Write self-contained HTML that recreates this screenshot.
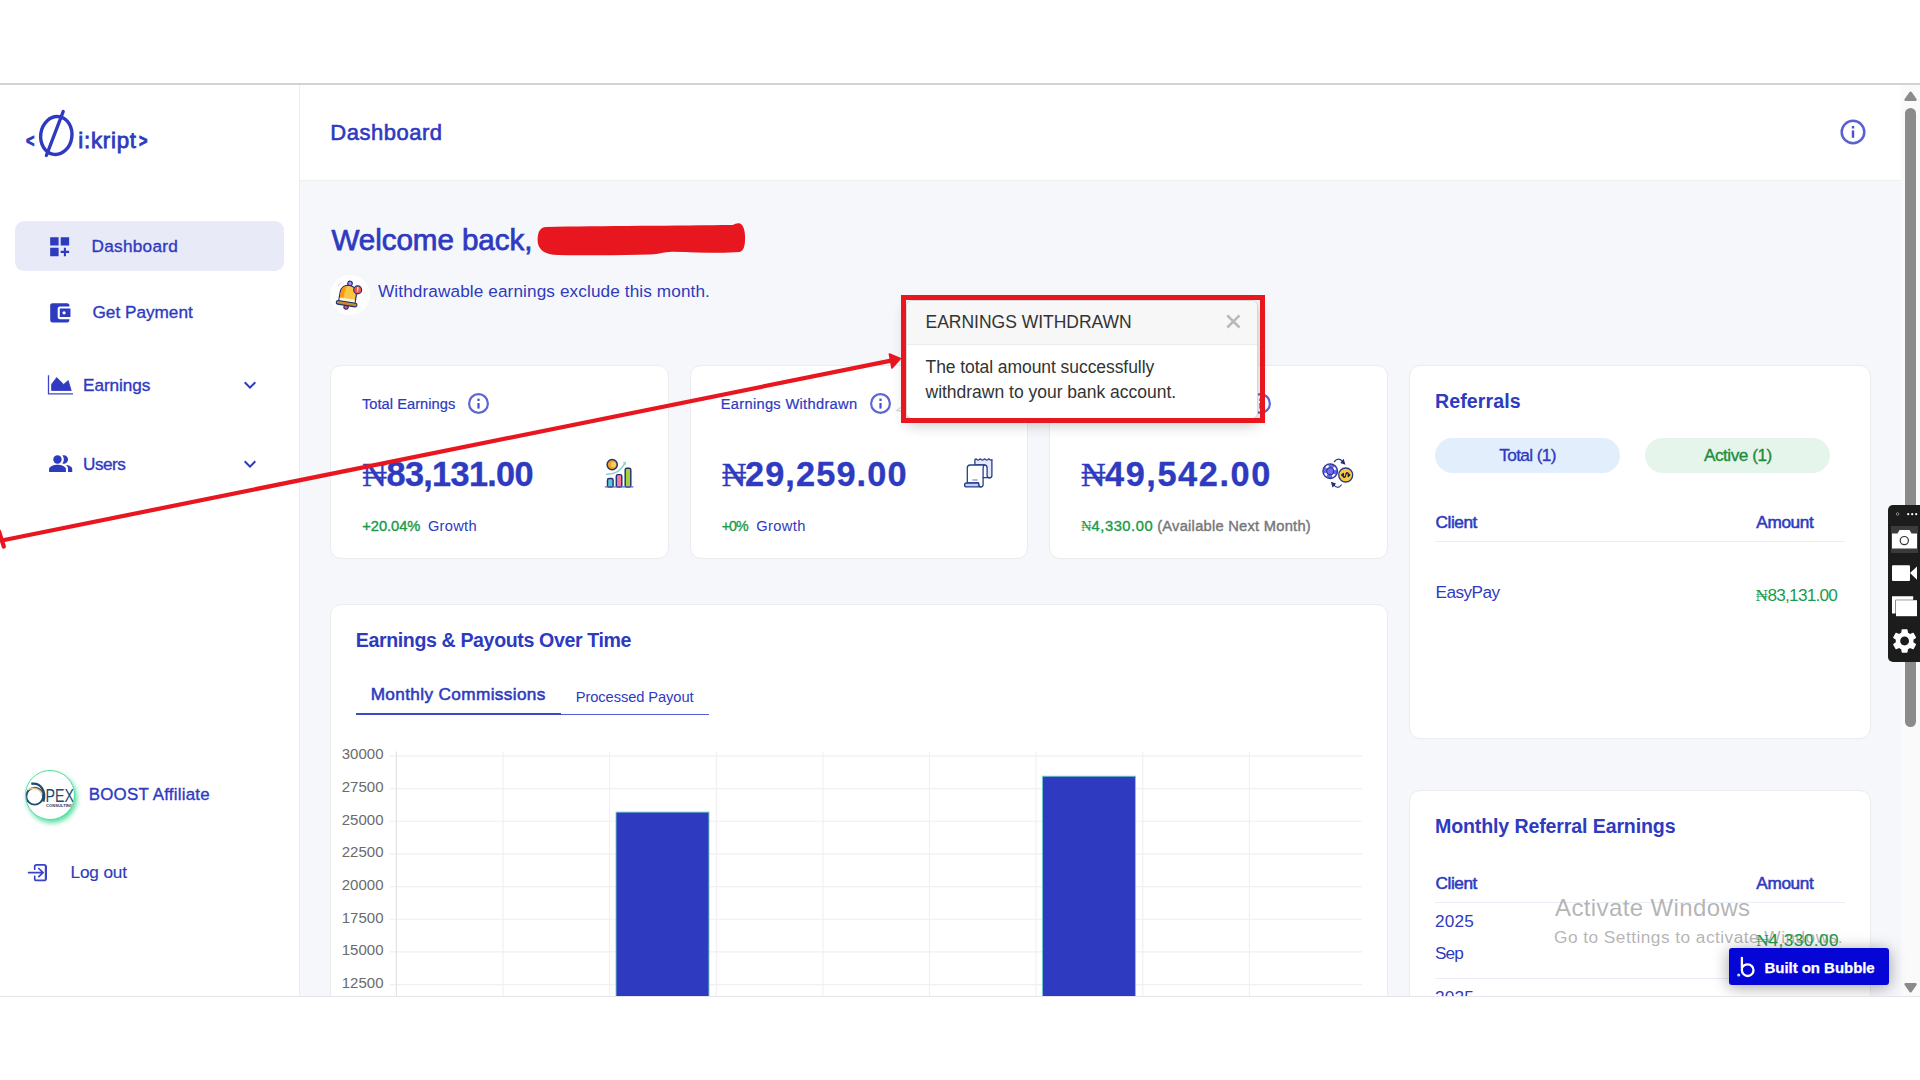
<!DOCTYPE html>
<html lang="en"><head><meta charset="utf-8"><title>Dashboard</title>
<style>
*{box-sizing:border-box;margin:0;padding:0}
html,body{width:1920px;height:1080px;overflow:hidden;background:#fff}
body{font-family:'Liberation Sans',sans-serif;position:relative}
#root{position:absolute;left:0;top:0;width:1920px;height:1080px;overflow:hidden}
.abs{position:absolute}
.t{position:absolute;white-space:pre;line-height:1;display:block}
svg{position:absolute;overflow:visible}
.card{position:absolute;background:#fff;border:1px solid #ececef;border-radius:11px}
#lg_lt{left:26.30px;top:131.80px;font-size:18.5px;font-weight:700;color:#2e3abf;letter-spacing:0.000px;-webkit-text-stroke:0.9px #2e3abf;transform:scaleX(.78);transform-origin:0 0;}
#lg_txt{left:78.25px;top:129.80px;font-size:22.3px;font-weight:400;color:#2e3abf;letter-spacing:0.742px;-webkit-text-stroke:0.8px #2e3abf;}
#lg_gt{left:139.30px;top:131.80px;font-size:18.5px;font-weight:700;color:#2e3abf;letter-spacing:0.000px;-webkit-text-stroke:0.9px #2e3abf;transform:scaleX(.78);transform-origin:0 0;}
#sb_dash{left:91.50px;top:238.00px;font-size:17.2px;font-weight:400;color:#2e3abf;letter-spacing:0.275px;-webkit-text-stroke:0.35px #2e3abf;}
#sb_pay{left:92.50px;top:303.50px;font-size:17.2px;font-weight:400;color:#2e3abf;letter-spacing:-0.005px;-webkit-text-stroke:0.35px #2e3abf;}
#sb_earn{left:83.10px;top:377.20px;font-size:17.2px;font-weight:400;color:#2e3abf;letter-spacing:-0.086px;-webkit-text-stroke:0.35px #2e3abf;}
#sb_users{left:83.10px;top:456.00px;font-size:17.2px;font-weight:400;color:#2e3abf;letter-spacing:-0.525px;-webkit-text-stroke:0.35px #2e3abf;}
#sb_boost{left:88.70px;top:787.40px;font-size:16.9px;font-weight:400;color:#2e3abf;letter-spacing:0.236px;-webkit-text-stroke:0.35px #2e3abf;}
#sb_logout{left:70.50px;top:863.50px;font-size:17.2px;font-weight:400;color:#2e3abf;letter-spacing:-0.133px;-webkit-text-stroke:0.15px #2e3abf;}
#hd_title{left:330.25px;top:121.50px;font-size:22px;font-weight:400;color:#2e3abf;letter-spacing:0.525px;-webkit-text-stroke:0.6px #2e3abf;}
#welcome{left:331.50px;top:224.50px;font-size:29.6px;font-weight:400;color:#2e3abf;letter-spacing:-0.067px;-webkit-text-stroke:0.75px #2e3abf;}
#notice{left:378.00px;top:283.00px;font-size:17.2px;font-weight:400;color:#2e3abf;letter-spacing:0.105px;}
#c1_lbl{left:361.90px;top:396.50px;font-size:14.7px;font-weight:400;color:#2e3abf;letter-spacing:0.023px;-webkit-text-stroke:0.2px #2e3abf;}
#c2_lbl{left:720.70px;top:396.50px;font-size:14.7px;font-weight:400;color:#2e3abf;letter-spacing:0.294px;-webkit-text-stroke:0.2px #2e3abf;}
#c1_n{left:362.30px;top:457.80px;font-size:34px;font-weight:400;color:#2e3abf;letter-spacing:0.000px;font-family:'Liberation Serif',serif;-webkit-text-stroke:0.45px #2e3abf;}
#c1_amt{left:386.50px;top:456.80px;font-size:34.3px;font-weight:700;color:#2e3abf;letter-spacing:-0.688px;-webkit-text-stroke:0.35px #2e3abf;}
#c2_n{left:721.70px;top:457.80px;font-size:34px;font-weight:400;color:#2e3abf;letter-spacing:0.000px;font-family:'Liberation Serif',serif;-webkit-text-stroke:0.45px #2e3abf;}
#c2_amt{left:745.00px;top:456.80px;font-size:34.3px;font-weight:700;color:#2e3abf;letter-spacing:1.113px;-webkit-text-stroke:0.35px #2e3abf;}
#c3_n{left:1081.00px;top:457.80px;font-size:34px;font-weight:400;color:#2e3abf;letter-spacing:0.000px;font-family:'Liberation Serif',serif;-webkit-text-stroke:0.45px #2e3abf;}
#c3_amt{left:1105.00px;top:456.80px;font-size:34.3px;font-weight:700;color:#2e3abf;letter-spacing:1.587px;-webkit-text-stroke:0.35px #2e3abf;}
#c1_g1{left:362.30px;top:518.50px;font-size:14.7px;font-weight:400;color:#1b9a4a;letter-spacing:-0.067px;-webkit-text-stroke:0.4px #1b9a4a;}
#c1_g2{left:427.90px;top:518.50px;font-size:14.7px;font-weight:400;color:#2e3abf;letter-spacing:0.280px;}
#c2_g1{left:721.70px;top:518.50px;font-size:14.2px;font-weight:400;color:#1b9a4a;letter-spacing:-0.900px;-webkit-text-stroke:0.35px #1b9a4a;}
#c2_g2{left:756.30px;top:518.50px;font-size:14.7px;font-weight:400;color:#2e3abf;letter-spacing:0.360px;}
#c3_gn{left:1081.00px;top:518.50px;font-size:14.7px;font-weight:400;color:#1b9a4a;letter-spacing:0.000px;font-family:'Liberation Serif',serif;}
#c3_g1{left:1091.50px;top:518.50px;font-size:14.7px;font-weight:400;color:#1b9a4a;letter-spacing:0.571px;-webkit-text-stroke:0.4px #1b9a4a;}
#c3_g2{left:1157.20px;top:518.50px;font-size:14.7px;font-weight:400;color:#777;letter-spacing:0.248px;-webkit-text-stroke:0.4px #777;}
#pp_title{left:925.50px;top:314.20px;font-size:17.5px;font-weight:400;color:#333;letter-spacing:-0.012px;}
#pp_l1{left:925.50px;top:359.00px;font-size:17.5px;font-weight:400;color:#333;letter-spacing:-0.064px;}
#pp_l2{left:925.50px;top:383.70px;font-size:17.5px;font-weight:400;color:#333;letter-spacing:-0.010px;}
#rf_title{left:1434.90px;top:392.20px;font-size:19.6px;font-weight:700;color:#2e3abf;letter-spacing:0.100px;}
#rf_total{left:1499.30px;top:447.10px;font-size:17.2px;font-weight:400;color:#2e3abf;letter-spacing:-0.625px;-webkit-text-stroke:0.35px #2e3abf;}
#rf_active{left:1703.90px;top:447.10px;font-size:17.2px;font-weight:400;color:#1e8c3a;letter-spacing:-0.467px;-webkit-text-stroke:0.35px #1e8c3a;}
#rf_client{left:1435.50px;top:513.70px;font-size:17.2px;font-weight:400;color:#2e3abf;letter-spacing:-0.420px;-webkit-text-stroke:0.55px #2e3abf;}
#rf_amount{left:1756.30px;top:513.70px;font-size:17.2px;font-weight:400;color:#2e3abf;letter-spacing:-0.340px;-webkit-text-stroke:0.55px #2e3abf;}
#rf_easy{left:1435.50px;top:584.10px;font-size:17.2px;font-weight:400;color:#2e3abf;letter-spacing:-0.550px;}
#rf_n{left:1755.50px;top:586.70px;font-size:17.2px;font-weight:400;color:#1b9a4a;letter-spacing:0.000px;font-family:'Liberation Serif',serif;}
#rf_amt{left:1767.50px;top:586.70px;font-size:17.2px;font-weight:400;color:#1b9a4a;letter-spacing:-0.762px;}
#ch_title{left:355.70px;top:630.50px;font-size:19.6px;font-weight:700;color:#2e3abf;letter-spacing:-0.378px;}
#ch_tab1{left:370.70px;top:686.10px;font-size:17.2px;font-weight:400;color:#2e3abf;letter-spacing:0.367px;-webkit-text-stroke:0.55px #2e3abf;}
#ch_tab2{left:575.80px;top:690.20px;font-size:14.7px;font-weight:400;color:#2e3abf;letter-spacing:-0.093px;}
#mr_title{left:1435.00px;top:817.30px;font-size:19.6px;font-weight:700;color:#2e3abf;letter-spacing:-0.138px;}
#mr_client{left:1435.50px;top:875.00px;font-size:17.2px;font-weight:400;color:#2e3abf;letter-spacing:-0.420px;-webkit-text-stroke:0.55px #2e3abf;}
#mr_amount{left:1756.30px;top:875.00px;font-size:17.2px;font-weight:400;color:#2e3abf;letter-spacing:-0.340px;-webkit-text-stroke:0.55px #2e3abf;}
#mr_y1{left:1435.00px;top:913.00px;font-size:17.2px;font-weight:400;color:#2e3abf;letter-spacing:0.150px;}
#mr_m1{left:1435.00px;top:944.50px;font-size:17.2px;font-weight:400;color:#2e3abf;letter-spacing:-0.850px;}
#mr_n{left:1756.30px;top:931.90px;font-size:17.2px;font-weight:400;color:#1b9a4a;letter-spacing:0.000px;font-family:'Liberation Serif',serif;z-index:3;}
#mr_amt{left:1768.50px;top:931.90px;font-size:17.2px;font-weight:400;color:#1b9a4a;letter-spacing:0.443px;z-index:3;}
#mr_y2{left:1435.00px;top:988.50px;font-size:17.2px;font-weight:400;color:#2e3abf;letter-spacing:0.150px;}
#aw1{left:1555.00px;top:895.50px;font-size:24px;font-weight:400;color:rgba(125,125,125,0.58);letter-spacing:0.380px;}
#aw2{left:1554.00px;top:928.50px;font-size:17.3px;font-weight:400;color:rgba(125,125,125,0.58);letter-spacing:0.462px;}
#bb{left:1764.50px;top:959.90px;font-size:15px;font-weight:700;color:#fff;letter-spacing:-0.043px;-webkit-text-stroke:0.25px #fff;z-index:6;}
.ax{position:absolute;left:330px;width:53.5px;text-align:right;font-size:15px;line-height:16px;color:#6b6b6b}
</style></head><body><div id="root">

<!-- browser chrome top line -->
<div class="abs" style="left:0;top:83px;width:1920px;height:2.200px;background:#d2d3d3"></div>

<!-- sidebar -->
<div class="abs" id="sidebar" style="left:0;top:85px;width:300px;height:912px;background:#fff;border-right:1px solid #ededf0"></div>
<!-- header -->
<div class="abs" id="header" style="left:300px;top:85px;width:1601px;height:95.800px;background:#fff;border-bottom:1.400px solid #efeff1"></div>
<!-- content bg -->
<div class="abs" id="content" style="left:300px;top:180.800px;width:1601px;height:816.200px;background:#f6f7fb"></div>

<!-- logo -->
<span class="t" id="lg_lt">&lt;</span>
<svg style="left:36px;top:106px" width="42" height="56" viewBox="36 106 42 56"><g fill="none" stroke="#2e3abf" stroke-linecap="round"><ellipse cx="56.3" cy="135.5" rx="15.6" ry="19" stroke-width="3.4" transform="rotate(8 56.3 135.5)"/><path d="M63.2 111.5 L46.4 155.5" stroke-width="3.4"/></g></svg>
<span class="t" id="lg_txt">i:kript</span>
<span class="t" id="lg_gt">&gt;</span>

<!-- sidebar nav -->
<div class="abs" style="left:15px;top:221px;width:269px;height:50px;border-radius:9px;background:#e8eaf8"></div>
<svg style="left:46.8px;top:233.8px" width="25.3" height="25.3" viewBox="0 0 24 24"><path fill="#2e3abf" d="M3 3h8v8H3zm10 0h8v8h-8zM3 13h8v8H3zm15 0h-2v3h-3v2h3v3h2v-3h3v-2h-3z"/></svg>
<span class="t" id="sb_dash">Dashboard</span>
<svg style="left:46.8px;top:299.6px" width="25.6" height="25.6" viewBox="0 0 24 24"><path fill="#2e3abf" d="M21 18v1c0 1.1-.9 2-2 2H5c-1.11 0-2-.9-2-2V5c0-1.1.89-2 2-2h14c1.1 0 2 .9 2 2v1h-9c-1.11 0-2 .9-2 2v8c0 1.1.89 2 2 2h9zm-9-2h10V8H12v8zm4-2.5c-.83 0-1.5-.67-1.5-1.5s.67-1.5 1.5-1.5 1.5.67 1.5 1.5-.67 1.5-1.5 1.5z"/></svg>
<span class="t" id="sb_pay">Get Payment</span>
<svg style="left:46px;top:373px" width="30" height="24" viewBox="46 373 30 24"><path d="M48.500 375.300 V393.800 H73" fill="none" stroke="#3a46c5" stroke-width="1.300"/><path d="M51.600 390.500 V384.200 L56.700 377.600 L63.700 384.400 L68.200 380.500 L71.200 390.500 Z" fill="#2e3abf" stroke="#2e3abf" stroke-width=".800" stroke-linejoin="round"/></svg>
<span class="t" id="sb_earn">Earnings</span>
<svg style="left:237.75px;top:372.9px" width="24" height="24" viewBox="0 0 24 24"><path fill="#2e3abf" d="M16.59 8.59L12 13.17 7.41 8.59 6 10l6 6 6-6z"/></svg>
<svg style="left:47.900px;top:450.800px" width="25.300" height="25.300" viewBox="0 0 24 24"><g fill="#2e3abf"><path d="M16.670 13.130C18.040 14.060 19 15.320 19 17v3h4v-3c0-2.180-3.570-3.470-6.330-3.870z"/><circle cx="9" cy="8" r="4"/><path d="M15 12c2.210 0 4-1.790 4-4s-1.790-4-4-4c-.470 0-.910.100-1.330.240C14.500 5.270 15 6.580 15 8s-.500 2.730-1.330 3.760c.420.140.860.240 1.330.240z"/><path d="M9 13c-2.670 0-8 1.340-8 4v3h16v-3c0-2.660-5.330-4-8-4z"/></g></svg>
<span class="t" id="sb_users">Users</span>
<svg style="left:237.75px;top:452.2px" width="24" height="24" viewBox="0 0 24 24"><path fill="#2e3abf" d="M16.59 8.59L12 13.17 7.41 8.59 6 10l6 6 6-6z"/></svg>

<!-- avatar -->
<div class="abs" id="avatar" style="left:25px;top:770px;width:50px;height:50px;border-radius:50%;background:#fff;border:1px solid #55dda0;box-shadow:2px 3px 5px rgba(60,215,145,.85);overflow:hidden">
  <svg style="left:-1px;top:-1px" width="50" height="50" viewBox="25 770 50 50">
    <circle cx="34.700" cy="796.200" r="8.400" fill="none" stroke="#1f4b6e" stroke-width="1.900"/>
    <path d="M27.600 790 A9.800 9.800 0 0 1 42.300 794.500" fill="none" stroke="#e9c98f" stroke-width="1.500"/>
    <path d="M31.300 783.800 C41 782.300 46.300 791.500 43.300 801.700" fill="none" stroke="#1f4b6e" stroke-width="2.400"/>
    <text x="45.4" y="801.8" font-family="'Liberation Sans',sans-serif" font-size="18.2" fill="#1f4b6e" textLength="28.5" lengthAdjust="spacingAndGlyphs">PEX</text>
    <text x="46" y="807" font-family="'Liberation Sans',sans-serif" font-size="3.6" font-weight="700" fill="#1f3a5f" textLength="27" lengthAdjust="spacingAndGlyphs">CONSULTING</text>
  </svg>
</div>
<span class="t" id="sb_boost">BOOST Affiliate</span>
<!-- logout icon -->
<svg style="left:26px;top:862px" width="24" height="22" viewBox="26 862 24 22"><g fill="none" stroke="#3843c6" stroke-width="1.700" stroke-linecap="round" stroke-linejoin="round"><path d="M34.700 869.200 V866.600 Q34.700 864.900 36.400 864.900 H44.200 Q45.900 864.900 45.900 866.600 V878.700 Q45.900 880.400 44.200 880.400 H36.400 Q34.700 880.400 34.700 878.700 V876.300"/><path d="M45.900 866.600 V878.700" stroke-width="2.200"/><path d="M28.600 872.600 H42.600"/><path d="M38.800 868.500 L43 872.600 L38.800 876.700"/></g></svg>
<span class="t" id="sb_logout">Log out</span>

<!-- header -->
<span class="t" id="hd_title">Dashboard</span>
<svg style="left:1839.600px;top:119.100px" width="26" height="26" viewBox="0 0 26 26"><circle cx="13" cy="13" r="11.300" fill="none" stroke="#5862d3" stroke-width="2.500"/><rect x="11.800" y="11.400" width="2.400" height="7.400" fill="#4752cc"/><rect x="11.800" y="7" width="2.400" height="2.500" fill="#4752cc"/></svg>

<!-- welcome -->
<span class="t" id="welcome">Welcome back,</span>
<svg style="left:536px;top:222px" width="212" height="36" viewBox="536 222 212 36"><path fill="#e8161f" d="M537.600 240 C537.600 232 540 227.200 546 226.900 C600 226 680 225.600 733 225 C735 223.600 738 222.800 740 223.500 C743.600 225 745.100 231 745.100 238 C745.100 246 743.600 251 739.500 252 C725 253.400 700 252.600 672 251.800 C664 252 660 254.200 650 254.600 C620 255.600 585 255.400 558 255 C545 254.800 537.600 250 537.600 240 Z"/></svg>
<!-- bell -->
<div class="abs" style="left:330px;top:275px;width:40px;height:40px;border-radius:50%;background:#fefefe"></div>
<svg style="left:330px;top:275px" width="40" height="40" viewBox="330 275 40 40">
 <g transform="rotate(9 348 295)">
  <circle cx="348.2" cy="283.3" r="2.3" fill="#a78bfa" stroke="#1f2f78" stroke-width="1.1"/>
  <circle cx="348" cy="307.2" r="2.2" fill="#e2546b" stroke="#1f2f78" stroke-width="1.1"/>
  <path d="M339.8 302.5 V293.5 C339.8 288.3 343.4 285.4 348 285.4 C352.6 285.4 356.2 288.3 356.2 293.5 V302.5 Z" fill="#fbc644" stroke="#1f2f78" stroke-width="1.2"/>
  <path d="M340.4 301.9 V293.5 C340.4 289.5 342.5 286.8 345.6 286 C344.3 289.5 343.9 295 344 298.6 L340.4 298.6 Z" fill="#f79a0f"/>
  <rect x="340.4" y="298.7" width="15.2" height="3.2" fill="#fdf1d9"/>
  <rect x="337.6" y="302" width="20.8" height="3.6" rx="1.6" fill="#c98a2b" stroke="#1f2f78" stroke-width="1.1"/>
 </g>
 <circle cx="357.7" cy="289.9" r="4" fill="#ee5544" stroke="#1f2f78" stroke-width="1.1"/>
 <path d="M357.1 287.3 L358.5 287.3 L358.1 291.9 L357.5 291.9 Z" fill="#fff"/>
 <path d="M338 286.5 Q339 283.6 341.6 282.6" fill="none" stroke="#f6b8c2" stroke-width=".7"/>
</svg>
<span class="t" id="notice">Withdrawable earnings exclude this month.</span>

<!-- stat cards -->
<div class="card" style="left:330px;top:365px;width:339px;height:193.500px"></div>
<div class="card" style="left:690px;top:365px;width:338.300px;height:193.500px"></div>
<div class="card" style="left:1049.300px;top:365px;width:339px;height:193.500px"></div>
<span class="t" id="c1_lbl">Total Earnings</span>
<svg class="info" style="left:468.2px;top:393px" width="21" height="21" viewBox="0 0 21 21"><circle cx="10.5" cy="10.5" r="9.400" fill="none" stroke="#5d66d6" stroke-width="2.200"/><rect x="9.400" y="10" width="2.200" height="5.600" fill="#4650cb"/><rect x="9.400" y="5.600" width="2.200" height="2.400" fill="#4650cb"/></svg>
<span class="t" id="c2_lbl">Earnings Withdrawn</span>
<svg class="info" style="left:869.6px;top:393px" width="21" height="21" viewBox="0 0 21 21"><circle cx="10.5" cy="10.5" r="9.400" fill="none" stroke="#5d66d6" stroke-width="2.200"/><rect x="9.400" y="10" width="2.200" height="5.600" fill="#4650cb"/><rect x="9.400" y="5.600" width="2.200" height="2.400" fill="#4650cb"/></svg>
<svg class="info" style="left:1249.5px;top:393px" width="21" height="21" viewBox="0 0 21 21"><circle cx="10.5" cy="10.5" r="9.400" fill="none" stroke="#5d66d6" stroke-width="2.200"/><rect x="9.400" y="10" width="2.200" height="5.600" fill="#4650cb"/><rect x="9.400" y="5.600" width="2.200" height="2.400" fill="#4650cb"/></svg>
<span class="t" id="c1_n">₦</span><span class="t" id="c1_amt">83,131.00</span>
<span class="t" id="c2_n">₦</span><span class="t" id="c2_amt">29,259.00</span>
<span class="t" id="c3_n">₦</span><span class="t" id="c3_amt">49,542.00</span>
<span class="t" id="c1_g1">+20.04%</span><span class="t" id="c1_g2">Growth</span>
<span class="t" id="c2_g1">+0%</span><span class="t" id="c2_g2">Growth</span>
<span class="t" id="c3_gn">₦</span><span class="t" id="c3_g1">4,330.00</span><span class="t" id="c3_g2">(Available Next Month)</span>

<!-- card icon 1: growth chart -->
<svg style="left:603px;top:456px" width="32" height="34" viewBox="603 456 32 34">
 <path d="M606.6 474.2 C614 474.6 621 470.5 625 463.2" fill="none" stroke="#86d2d2" stroke-width="1.500" stroke-linecap="round"/>
 <path d="M622.6 462.6 L625.8 461.6 L626 465.2 Z" fill="#8fd6d6"/>
 <circle cx="612.2" cy="464.6" r="5.1" fill="#f6a21c" stroke="#22336f" stroke-width="1.5"/>
 <circle cx="613.4" cy="464.6" r="2.6" fill="#fbd05a"/>
 <rect x="607.5" y="478.4" width="5.6" height="8.6" rx="1.6" fill="#5cc8d6" stroke="#22336f" stroke-width="1.450"/>
 <rect x="616.3" y="474.6" width="5.5" height="12.4" rx="1.6" fill="#f47c9c" stroke="#22336f" stroke-width="1.450"/>
 <rect x="625.2" y="468.2" width="5.6" height="18.8" rx="1.6" fill="#a4d13e" stroke="#22336f" stroke-width="1.450"/>
 <path d="M605.4 486.9 H632.8" stroke="#5a67b8" stroke-width="1.3" stroke-linecap="round"/>
</svg>
<!-- card icon 2: receipt -->
<svg style="left:962px;top:456px" width="33" height="34" viewBox="962 456 33 34"><g stroke="#263f88" stroke-width="1.3" stroke-linejoin="round" stroke-linecap="round">
 <path d="M974.9 465 V459.6 q1.100 -1.200 2.150 0 t2.150 0 t2.150 0 t2.150 0 t2.150 0 t2.150 0 t2.150 0 t1.950 0 V475.600 Q991.900 478 989.500 478 T987.100 475.600 V468 Q987.100 465 984.600 465 Z" fill="#e3e8ff"/>
 <path d="M967.300 483 V468 Q967.300 465 970.300 465 H984.600 Q983.100 465.800 983.100 468 V484.400 Q983.100 486.900 980.700 486.900 Q978.700 486.900 978.600 483 Z" fill="#fff"/>
 <path d="M966.600 483 H978.500 Q978.500 486.900 980.800 486.900 H966.600 Q964.600 486.900 964.600 484.900 Q964.600 483 966.600 483 Z" fill="#c5cdf7"/>
 <path d="M983.100 477.600 H989.400" fill="none"/>
 </g>
 <rect x="972.300" y="479.200" width="5.400" height="1.600" fill="#a99df0"/>
</svg>
<!-- card icon 3: exchange -->
<svg style="left:1320px;top:455px" width="36" height="36" viewBox="1320 455 36 36">
 <circle cx="1330.200" cy="471.200" r="7.300" fill="#6b63f2" stroke="#273c86" stroke-width="1.300"/>
 <circle cx="1330.200" cy="471.200" r="5.100" fill="none" stroke="#fff" stroke-width="2.600" stroke-dasharray="2.900 5.110" transform="rotate(35 1330.200 471.200)"/>
 <circle cx="1330.200" cy="471.200" r="3.400" fill="#7469f7" stroke="#273c86" stroke-width="1.100"/>
 <circle cx="1345.700" cy="475" r="7" fill="#fbc943" stroke="#273c86" stroke-width="1.300"/>
 <path d="M1343.300 477.300 Q1345.600 478.300 1345.700 475 Q1345.800 471.800 1348.200 472.800 M1341.600 475 l1.800 -1.700 v3.400 Z M1349.900 475 l-1.800 -1.700 v3.400 Z" fill="#1b2550" stroke="#1b2550" stroke-width="1.100" stroke-linejoin="round"/>
 <path d="M1334.400 461.500 Q1338.500 456.500 1343 461.800" fill="none" stroke="#273c86" stroke-width="1.200" stroke-linecap="round"/>
 <path d="M1340.300 462.900 L1345.500 464.700 L1343.600 458.700 Z" fill="#1d2f7a"/>
 <path d="M1341.300 485 Q1337.500 489.800 1333.300 484.500" fill="none" stroke="#273c86" stroke-width="1.200" stroke-linecap="round"/>
 <path d="M1336 483.400 L1330.800 481.700 L1332.700 487.700 Z" fill="#1d2f7a"/>
</svg>

<!-- chart card -->
<div class="card" style="left:330px;top:604px;width:1058.300px;height:420px"></div>
<span class="t" id="ch_title">Earnings &amp; Payouts Over Time</span>
<span class="t" id="ch_tab1">Monthly Commissions</span>
<div class="abs" style="left:356px;top:712.800px;width:205px;height:2.500px;background:#3d48c7"></div>
<span class="t" id="ch_tab2">Processed Payout</span>
<div class="abs" style="left:561px;top:714.100px;width:148px;height:1.200px;background:#5560d0"></div>
<svg id="chart" style="left:330px;top:740px" width="1058" height="258" viewBox="330 740 1058 258">
 <g stroke="#f0f0f0" stroke-width="1.150" fill="none">
  <path d="M389.600 755.900H1362M389.600 788.600H1362M389.600 821.200H1362M389.600 853.900H1362M389.600 886.600H1362M389.600 919.200H1362M389.600 951.900H1362M389.600 984.600H1362"/>
  <path d="M503 751.500V998M609.600 751.500V998M716.300 751.500V998M822.900 751.500V998M929.500 751.500V998M1036.100 751.500V998M1142.800 751.500V998M1249.400 751.500V998"/>
 </g>
 <path d="M396.400 751.500V998" stroke="#e3e3e3" stroke-width="1.200"/>
 <rect x="616" y="812.100" width="93" height="190" fill="#2e3abf" stroke="#6fd0c4" stroke-width=".900"/>
 <rect x="1042.400" y="776.200" width="93" height="226" fill="#2e3abf" stroke="#6fd0c4" stroke-width=".900"/>
</svg>
<div class="ax" style="top:746.200px">30000</div>
<div class="ax" style="top:778.900px">27500</div>
<div class="ax" style="top:811.500px">25000</div>
<div class="ax" style="top:844.200px">22500</div>
<div class="ax" style="top:876.900px">20000</div>
<div class="ax" style="top:909.500px">17500</div>
<div class="ax" style="top:942.200px">15000</div>
<div class="ax" style="top:974.900px">12500</div>

<!-- referrals card -->
<div class="card" style="left:1409px;top:365px;width:462px;height:374px"></div>
<span class="t" id="rf_title">Referrals</span>
<div class="abs" style="left:1435px;top:438px;width:185.200px;height:35px;border-radius:17.5px;background:#e3eefc"></div>
<div class="abs" style="left:1644.800px;top:438px;width:185.400px;height:35px;border-radius:17.5px;background:#e6f5eb"></div>
<span class="t" id="rf_total">Total (1)</span><span class="t" id="rf_active">Active (1)</span>
<span class="t" id="rf_client">Client</span><span class="t" id="rf_amount">Amount</span>
<div class="abs" style="left:1435px;top:540.500px;width:410px;height:1.200px;background:#e9eef6"></div>
<span class="t" id="rf_easy">EasyPay</span><span class="t" id="rf_n">₦</span><span class="t" id="rf_amt">83,131.00</span>

<!-- monthly referral earnings card -->
<div class="card" style="left:1409px;top:790px;width:462px;height:300px"></div>
<span class="t" id="mr_title">Monthly Referral Earnings</span>
<span class="t" id="mr_client">Client</span><span class="t" id="mr_amount">Amount</span>
<div class="abs" style="left:1435px;top:902px;width:410px;height:1.200px;background:#e9eef6"></div>
<span class="t" id="mr_y1">2025</span><span class="t" id="mr_m1">Sep</span><span class="t" id="mr_n">₦</span><span class="t" id="mr_amt">4,330.00</span>
<div class="abs" style="left:1435px;top:977.500px;width:410px;height:1.200px;background:#e9eef6"></div>
<span class="t" id="mr_y2">2025</span>

<!-- windows watermark -->
<span class="t" id="aw1">Activate Windows</span><span class="t" id="aw2">Go to Settings to activate Windows.</span>

<!-- popup with red annotation box -->
<svg style="left:893px;top:400px" width="14" height="14" viewBox="893 400 14 14"><path d="M906 404 L896.500 410.500 L906 412 Z" fill="#fff" stroke="#cfcfcf" stroke-width="1"/></svg>
<div class="abs" id="popup" style="left:906px;top:299.500px;width:352px;height:119px;background:#fff;border-radius:6px;border:1px solid rgba(0,0,0,.16);box-shadow:0 6px 14px rgba(0,0,0,.22);overflow:hidden">
  <div style="height:44px;background:#f7f7f7;border-bottom:1px solid #ebebeb"></div>
</div>
<span class="t" id="pp_title">EARNINGS WITHDRAWN</span><span class="t" id="pp_l1">The total amount successfully</span><span class="t" id="pp_l2">withdrawn to your bank account.</span>
<svg style="left:1226px;top:313.500px" width="15" height="15" viewBox="0 0 15 15"><path d="M1.300 1.300L13.500 13.500M13.500 1.300L1.300 13.500" stroke="#b9b9b9" stroke-width="2.500" fill="none"/></svg>
<div class="abs" id="redbox" style="left:901px;top:294.500px;width:364px;height:128.500px;border:5px solid #e8161f"></div>

<!-- red arrow annotation -->
<svg style="left:0;top:340px" width="910" height="220" viewBox="0 340 910 220"><path d="M0.500 540.800 L891 360.600" stroke="#e8161f" stroke-width="4.200" fill="none"/><path d="M889.500 354.200 L900.200 358.700 L892 367.800 Z" fill="#e8161f" stroke="#e8161f" stroke-width="1.800" stroke-linejoin="round"/><path d="M-1 531.500 L3.800 546.500" stroke="#e8161f" stroke-width="4.200" stroke-linecap="round"/></svg>

<!-- scrollbar -->
<div class="abs" style="left:1901px;top:85px;width:19px;height:912px;background:#fafafa"></div>
<div class="abs" style="left:1905px;top:108px;width:10.800px;height:619px;border-radius:6px;background:#8b8b8b"></div>
<svg style="left:1903px;top:90px" width="14" height="12" viewBox="0 0 14 12"><path d="M2.700 9.800 L7.600 2.800 L12.500 9.800 Z" fill="#8b8b8b" stroke="#8b8b8b" stroke-width="2.600" stroke-linejoin="round"/></svg>
<svg style="left:1903px;top:981.500px" width="14" height="12" viewBox="0 0 14 12"><path d="M2.700 2.200 L7.600 9.200 L12.500 2.200 Z" fill="#8b8b8b" stroke="#8b8b8b" stroke-width="2.600" stroke-linejoin="round"/></svg>

<!-- screen recorder widget -->
<div class="abs" style="left:1888px;top:504.500px;width:36px;height:157px;border-radius:5px;background:#1c1c1c"></div>
<div class="abs" style="left:1891px;top:525.500px;width:27px;height:27.500px;background:#3b3b3b"></div>
<svg style="left:1888px;top:504px" width="32" height="158" viewBox="1888 504 32 158"><g fill="#fff">
 <circle cx="1897.600" cy="514" r="1.300" fill="none" stroke="#aaa" stroke-width=".700"/>
 <circle cx="1908.200" cy="514.200" r="1.100"/><circle cx="1912.200" cy="514.200" r="1.100"/><circle cx="1916.200" cy="514.200" r="1.100"/>
 <path d="M1892 533.500 H1897.500 L1899.500 530 H1909.500 L1911.500 533.500 H1917 V548.500 H1892 Z"/>
 <circle cx="1904.300" cy="540.600" r="4.100" fill="#fff" stroke="#333" stroke-width="1.200"/>
 <rect x="1892" y="565.300" width="18" height="15.600" rx="1"/><path d="M1910 573 L1917 566.500 V579.700 Z"/>
 <path d="M1892 596.300 H1913.200 V599.800 H1895.500 V613.400 H1892 Z"/><rect x="1896" y="600.200" width="21" height="16"/>
</g>
 <g transform="translate(1904.600 641) scale(1.230) translate(-12 -12)"><path fill="#fff" d="M19.140 12.940c.04-.300.060-.610.060-.940 0-.320-.020-.640-.070-.940l2.030-1.580c.180-.140.230-.410.120-.610l-1.920-3.320c-.120-.220-.370-.290-.590-.220l-2.390.960c-.500-.380-1.030-.700-1.620-.940l-.360-2.540c-.040-.240-.240-.410-.480-.410h-3.840c-.240 0-.430.170-.470.410l-.360 2.540c-.590.240-1.130.570-1.620.940l-2.390-.960c-.220-.080-.470 0-.590.220L2.740 8.870c-.120.210-.080.470.120.610l2.030 1.580c-.050.300-.09.630-.09.940s.020.640.070.940l-2.030 1.580c-.180.140-.230.410-.120.610l1.920 3.320c.120.220.370.290.590.220l2.390-.960c.500.380 1.030.700 1.620.940l.360 2.540c.050.240.240.410.480.410h3.840c.240 0 .440-.170.470-.410l.360-2.540c.590-.240 1.130-.560 1.620-.940l2.390.960c.220.080.470 0 .590-.220l1.920-3.320c.120-.220.070-.470-.120-.610l-2.010-1.580zM12 15.600c-1.980 0-3.600-1.620-3.600-3.600s1.620-3.600 3.600-3.600 3.600 1.620 3.600 3.600-1.620 3.600-3.600 3.600z"/></g>
</svg>

<!-- built on bubble badge -->
<div class="abs" style="z-index:5;left:1729px;top:948px;width:160px;height:37px;border-radius:3px;background:#0505d6;box-shadow:0 2px 16px rgba(0,0,0,.38)"></div>
<svg style="z-index:6;left:1735px;top:955px" width="24" height="24" viewBox="1735 955 24 24"><circle cx="1738.700" cy="975" r="1.600" fill="#a9f0ff"/><path d="M1741.900 958 V970.200 A5.800 5.800 0 1 0 1747.700 964.400 Q1743.800 964.400 1741.900 968" fill="none" stroke="#fff" stroke-width="2.300" stroke-linecap="round"/></svg>
<span class="t" id="bb">Built on Bubble</span>

<!-- bottom crop -->
<div class="abs" style="z-index:20;left:0;top:996px;width:1920px;height:84px;background:#fff;border-top:1.500px solid #e4e6ec"></div>
</div></body></html>
